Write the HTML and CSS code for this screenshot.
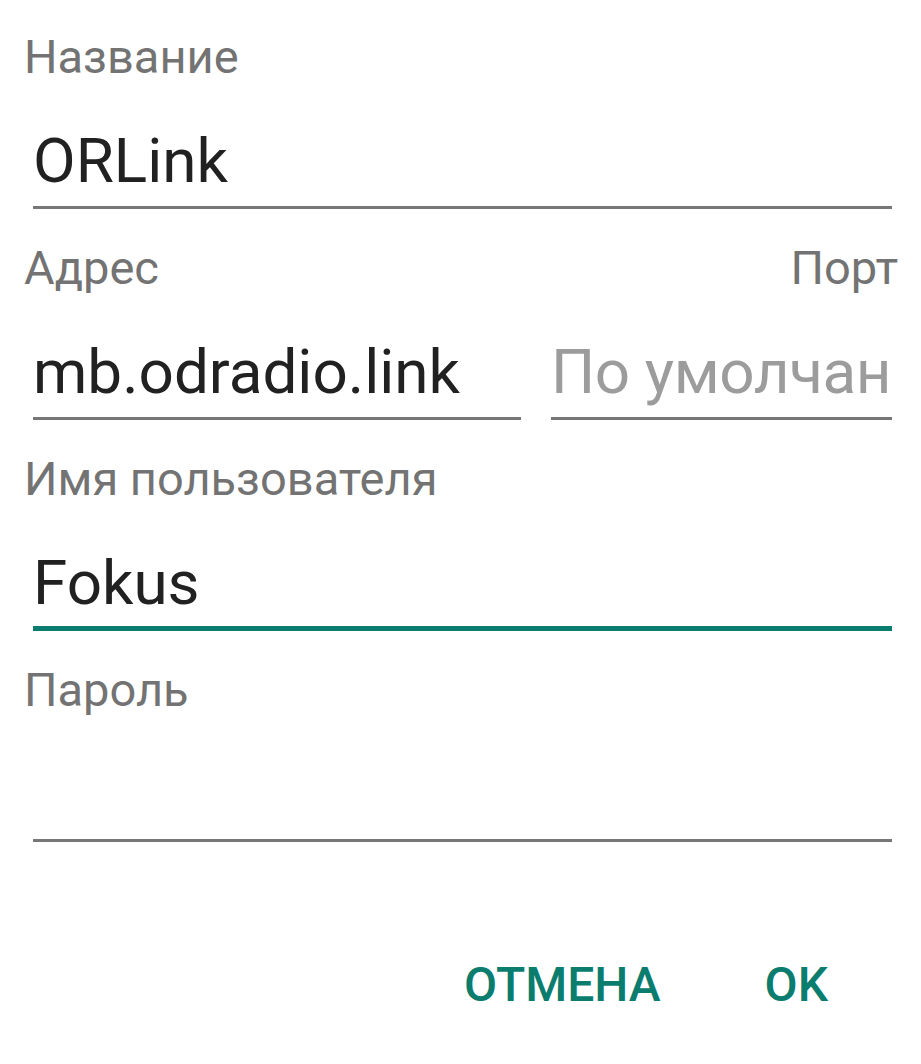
FILE: index.html
```html
<!DOCTYPE html>
<html lang="ru">
<head>
<meta charset="UTF-8">
<meta name="viewport" content="width=device-width, initial-scale=1.0">
<title>Сервер</title>
<link rel="stylesheet" href="styles.css">
</head>
<body>

<div class="dialog">
<div class="field">
<div class="label">Название</div>
<div class="input">ORLink</div>
</div>

<div class="field split">
<div class="col">
<div class="label">Адрес</div>
<div class="input">mb.odradio.link</div>
</div>
<div class="col port">
<div class="label">Порт</div>
<div class="input hint">По умолчан</div>
</div>
</div>

<div class="field">
<div class="label">Имя пользователя</div>
<div class="input focused">Fokus</div>
</div>

<div class="field">
<div class="label">Пароль</div>
<div class="input"></div>
</div>

<div class="buttons">
<button class="btn">ОТМЕНА</button>
<button class="btn">OK</button>
</div>
</div>

</body>
</html>
```

FILE: styles.css
```css
body {
margin: 0;
background-color: #fff;
font-family: Roboto, "Noto Sans", sans-serif;
}
.dialog {
padding: 29px 29px 0 24px;
}
.field {
margin-bottom: 31px;
}
.split {
display: grid;
grid-template-columns: 1fr 341px;
column-gap: 30px;
}
.label {
font-size: 47px;
line-height: 56px;
color: #737373;
}
.port .label {
text-align: right;
margin-right: -6px;
}
.input {
margin: 38px 0 0 9px;
height: 76px;
font-size: 62px;
line-height: 76px;
color: #212121;
white-space: nowrap;
overflow: hidden;
padding-bottom: 7px;
border-bottom: 3px solid #777;
}
.port .input {
margin-left: 0;
}
.hint {
color: #9c9c9c;
letter-spacing: -0.4px;
}
.focused {
padding-bottom: 5px;
border-bottom: 5px solid #0a7d6e;
}
.buttons {
display: flex;
justify-content: flex-end;
gap: 104px;
margin-top: 115px;
padding-right: 64px;
}
.btn {
font-family: Roboto, sans-serif;
font-size: 48px;
line-height: 56px;
font-weight: 500;
color: #0a7d6e;
background: none;
border: none;
padding: 0;
}
```
